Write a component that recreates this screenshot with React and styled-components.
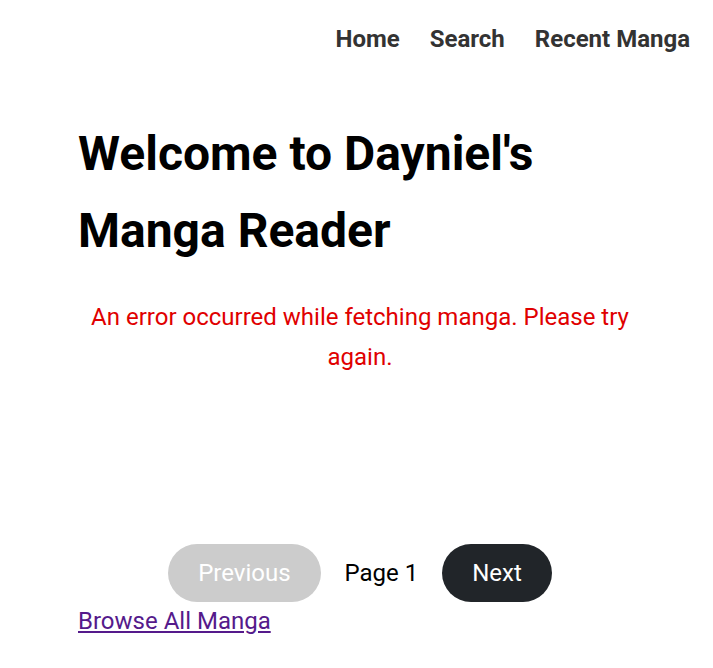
import React from "react";
import styled, { createGlobalStyle } from "styled-components";

const Global = createGlobalStyle`
  html, body { margin: 0; padding: 0; background: #fff; }
  body { font-family: Roboto, "Liberation Sans", Arial, sans-serif; }
`;

const Nav = styled.nav`
  display: flex;
  justify-content: flex-end;
  gap: 30px;
  padding: 25px 23px 0 0;
`;

const NavLink = styled.a`
  font-size: 24px;
  line-height: 28px;
  font-weight: 700;
  color: #333;
  text-decoration: none;
`;

const Main = styled.main`
  width: 564px;
  padding-left: 78px;
`;

const Title = styled.h1`
  margin: 62px 0 0;
  font-size: 48px;
  line-height: 77px;
  font-weight: 700;
  color: #000;
`;

const ErrorText = styled.p`
  margin: 29px 0 0;
  font-size: 24px;
  line-height: 39.6px;
  color: #e00000;
  text-align: center;
`;

const Pagination = styled.div`
  display: flex;
  justify-content: center;
  align-items: center;
  gap: 24px;
  margin-top: 167px;
`;

const PageButton = styled.button`
  border: none;
  border-radius: 29px;
  height: 58px;
  padding: 0 30px;
  font-family: inherit;
  font-size: 24px;
  color: #fff;
  background: ${(p) => (p.$disabled ? "#cccccc" : "#212529")};
  cursor: ${(p) => (p.$disabled ? "default" : "pointer")};
`;

const PageLabel = styled.span`
  font-size: 24px;
  color: #000;
`;

const BrowseLink = styled.a`
  display: inline-block;
  margin-top: 5px;
  font-size: 24px;
  color: #551a8b;
  text-decoration: underline;
`;

export default function App() {
  return (
    <>
      <Global />
      <Nav>
        <NavLink href="#">Home</NavLink>
        <NavLink href="#">Search</NavLink>
        <NavLink href="#">Recent Manga</NavLink>
      </Nav>
      <Main>
        <Title>Welcome to Dayniel's Manga Reader</Title>
        <ErrorText>An error occurred while fetching manga. Please try again.</ErrorText>
        <Pagination>
          <PageButton $disabled disabled>Previous</PageButton>
          <PageLabel>Page 1</PageLabel>
          <PageButton>Next</PageButton>
        </Pagination>
        <BrowseLink href="#">Browse All Manga</BrowseLink>
      </Main>
    </>
  );
}
